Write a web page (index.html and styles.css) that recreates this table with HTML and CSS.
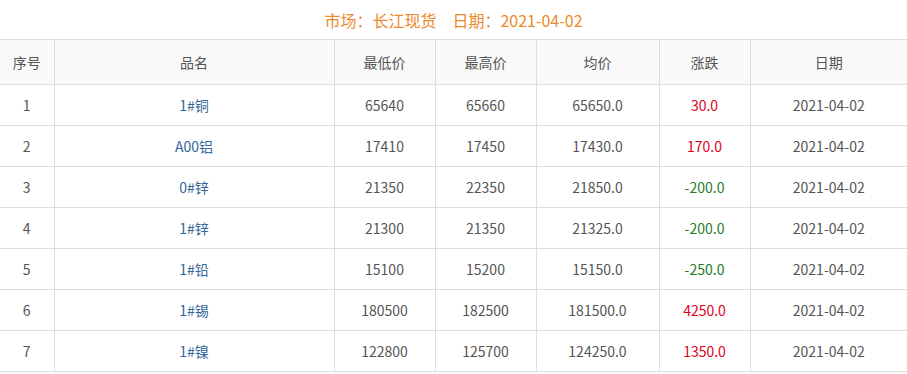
FILE: index.html
```html
<!DOCTYPE html>
<html lang="zh-CN">
<head>
    <meta charset="UTF-8">
    <title>长江现货</title>
    <link rel="stylesheet" href="styles.css">
</head>
<body>
    <div class="title">市场：长江现货<span class="date">日期：2021-04-02</span></div>
    <table class="price-table">
        <colgroup>
            <col style="width:54px">
            <col style="width:280px">
            <col style="width:101px">
            <col style="width:101px">
            <col style="width:123px">
            <col style="width:91px">
            <col style="width:157px">
        </colgroup>
        <thead>
            <tr><th>序号</th><th>品名</th><th>最低价</th><th>最高价</th><th>均价</th><th>涨跌</th><th>日期</th></tr>
        </thead>
        <tbody>
            <tr><td>1</td><td><a href="#">1#铜</a></td><td>65640</td><td>65660</td><td>65650.0</td><td class="up">30.0</td><td>2021-04-02</td></tr>
            <tr><td>2</td><td><a href="#">A00铝</a></td><td>17410</td><td>17450</td><td>17430.0</td><td class="up">170.0</td><td>2021-04-02</td></tr>
            <tr><td>3</td><td><a href="#">0#锌</a></td><td>21350</td><td>22350</td><td>21850.0</td><td class="down">-200.0</td><td>2021-04-02</td></tr>
            <tr><td>4</td><td><a href="#">1#锌</a></td><td>21300</td><td>21350</td><td>21325.0</td><td class="down">-200.0</td><td>2021-04-02</td></tr>
            <tr><td>5</td><td><a href="#">1#铅</a></td><td>15100</td><td>15200</td><td>15150.0</td><td class="down">-250.0</td><td>2021-04-02</td></tr>
            <tr><td>6</td><td><a href="#">1#锡</a></td><td>180500</td><td>182500</td><td>181500.0</td><td class="up">4250.0</td><td>2021-04-02</td></tr>
            <tr><td>7</td><td><a href="#">1#镍</a></td><td>122800</td><td>125700</td><td>124250.0</td><td class="up">1350.0</td><td>2021-04-02</td></tr>
        </tbody>
    </table>
</body>
</html>
```
FILE: styles.css
```css
body {
    margin: 0;
    font-family: "Noto Sans CJK SC", "Noto Sans", sans-serif;
    font-size: 14px;
    color: #555;
    overflow: hidden;
}
.title {
    height: 39px;
    line-height: 40px;
    text-align: center;
    font-size: 16px;
    color: #ec8a2d;
}
.title .date {
    margin-left: 16px;
}
.price-table {
    width: 907px;
    table-layout: fixed;
    border-collapse: collapse;
}
.price-table th,
.price-table td {
    border: 1px solid #ddd;
    text-align: center;
    padding: 0;
    font-weight: normal;
}
.price-table th:first-child,
.price-table td:first-child {
    border-left: none;
}
.price-table th:last-child,
.price-table td:last-child {
    border-right: none;
}
.price-table th {
    height: 44px;
    background-color: #f9f9f9;
    color: #555;
}
.price-table td {
    height: 40px;
}
.price-table a {
    color: #336699;
    text-decoration: none;
}
.up {
    color: #e3001b;
}
.down {
    color: #1e7d1e;
}
```
